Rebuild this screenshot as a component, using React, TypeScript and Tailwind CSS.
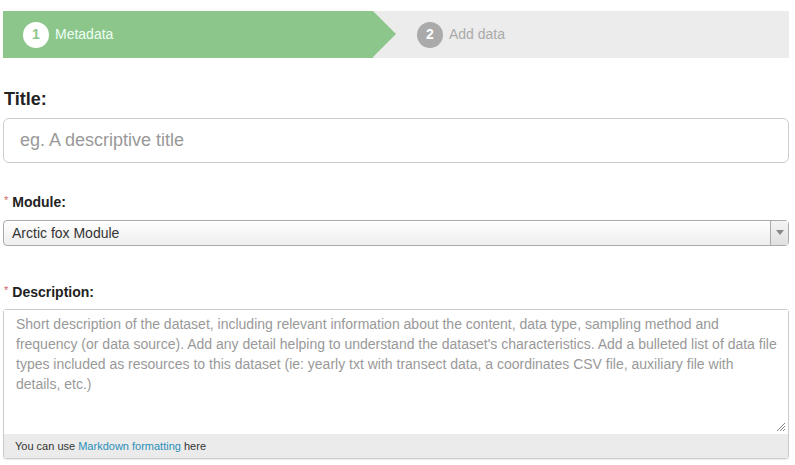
import React from "react";

export default function App() {
  return (
    <div
      className="min-h-[465px] w-[795px] bg-white pl-[3px] pr-[6px] text-[#333]"
      style={{ fontFamily: '"Liberation Sans", Arial, sans-serif' }}
    >
      {/* Stepper */}
      <div className="mt-[11px] flex h-[47px] bg-[#ececec]">
        <div className="flex w-[370px] items-center bg-[#8cc68a] pl-[20px]">
          <div className="flex h-[26px] w-[26px] items-center justify-center rounded-full bg-white text-[14px] font-bold text-[#8cc68a]">
            1
          </div>
          <span className="ml-[6px] text-[14px] text-[#effff6]">Metadata</span>
        </div>
        <div className="h-0 w-0 border-y-[23.5px] border-l-[23px] border-y-transparent border-l-[#8cc68a]" />
        <div className="flex items-center pl-[21px]">
          <div className="flex h-[26px] w-[26px] items-center justify-center rounded-full bg-[#aaaaaa] text-[14px] font-bold text-white">
            2
          </div>
          <span className="ml-[6px] text-[14px] text-[#aaaaaa]">Add data</span>
        </div>
      </div>

      {/* Title */}
      <div className="mt-[31px] pl-[1px] text-[18px] font-bold leading-[20px] text-[#222]">Title:</div>
      <div className="mt-[9px] flex h-[45px] items-center rounded-[6px] border border-[#cccccc] bg-white pl-[16px] text-[18px] text-[#999999]">
        eg. A descriptive title
      </div>

      {/* Module */}
      <div className="mt-[29px] flex items-start pl-[1px] leading-[20px]">
        <span className="mr-[4px] text-[11px] leading-[16px] text-[#cc6666]">*</span>
        <span className="text-[14px] font-bold text-[#222]">Module:</span>
      </div>
      <div className="mt-[8px] flex h-[26px] items-stretch rounded-[4px] border border-[#aaaaaa] bg-gradient-to-b from-white to-[#eeeeee]">
        <div className="flex flex-1 items-center pl-[8px] text-[14px] text-[#333]">Arctic fox Module</div>
        <div className="flex w-[18px] items-center justify-center border-l border-[#aaaaaa] bg-gradient-to-b from-[#f4f4f4] to-[#e0e0e0]">
          <svg width="8" height="6" viewBox="0 0 8 6">
            <path d="M0 0 L8 0 L4 5 Z" fill="#888" />
          </svg>
        </div>
      </div>

      {/* Description */}
      <div className="mt-[36px] flex items-start pl-[1px] leading-[20px]">
        <span className="mr-[4px] text-[11px] leading-[16px] text-[#cc6666]">*</span>
        <span className="text-[14px] font-bold text-[#222]">Description:</span>
      </div>
      <div className="mt-[7px] rounded-[3px] border border-[#cccccc] shadow-[0_1px_1px_rgba(0,0,0,0.08)]">
        <div className="relative h-[124px] bg-white pl-[12px] pr-[9px] pt-[4px] text-[14px] leading-[20px] text-[#999999]">
          Short description of the dataset, including relevant information about the content, data type, sampling method
          and frequency (or data source). Add any detail helping to understand the dataset's characteristics. Add a
          bulleted list of data file types included as resources to this dataset (ie: yearly txt with transect data, a
          coordinates CSV file, auxiliary file with details, etc.)
          <svg className="absolute bottom-[2px] right-[2px]" width="10" height="10" viewBox="0 0 10 10">
            <path d="M9 1 L1 9 M9 4 L4 9 M9 7 L7 9" stroke="#888" strokeWidth="1" />
          </svg>
        </div>
        <div className="flex h-[24px] items-center bg-[#ebebeb] pl-[11px] text-[11px] text-[#333]">
          You can use&nbsp;<span className="text-[#2a8fb8]">Markdown formatting</span>&nbsp;here
        </div>
      </div>
    </div>
  );
}
